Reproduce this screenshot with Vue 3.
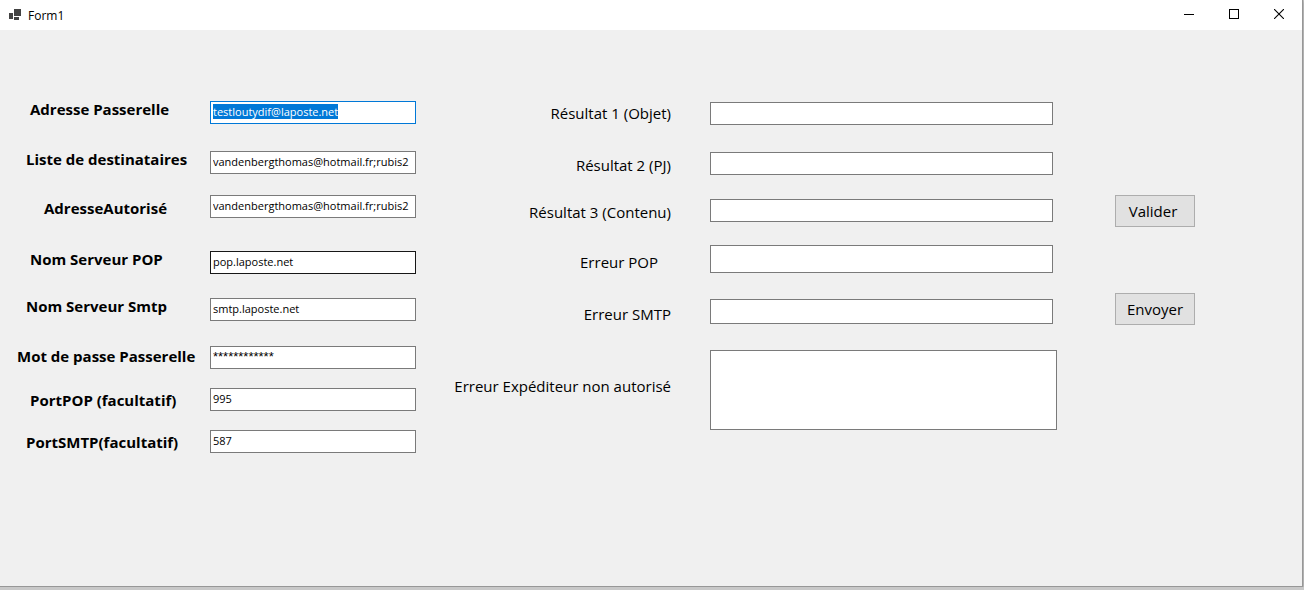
<script setup>
import { onMounted, ref } from 'vue'

const settings = ref([
  { id: 'gateway', label: 'Adresse Passerelle', value: 'testloutydif@laposte.net', indent: 'indent-l' },
  { id: 'recipients', label: 'Liste de destinataires', value: 'vandenbergthomas@hotmail.fr;rubis2', indent: 'indent-m' },
  { id: 'allowed', label: 'AdresseAutorisé', value: 'vandenbergthomas@hotmail.fr;rubis2', indent: 'indent-xl' },
  { id: 'pop', label: 'Nom Serveur POP', value: 'pop.laposte.net', indent: 'indent-l', look: 'hot' },
  { id: 'smtp', label: 'Nom Serveur Smtp', value: 'smtp.laposte.net', indent: 'indent-m' },
  { id: 'password', label: 'Mot de passe Passerelle', value: '************', indent: 'indent-s', look: 'masked' },
  { id: 'pop-port', label: 'PortPOP (facultatif)', value: '995', indent: 'indent-l' },
  { id: 'smtp-port', label: 'PortSMTP(facultatif)', value: '587', indent: 'indent-m' },
])

const results = ref([
  { id: 'subject', label: 'Résultat 1 (Objet)', value: '' },
  { id: 'attachment', label: 'Résultat 2 (PJ)', value: '' },
  { id: 'body', label: 'Résultat 3 (Contenu)', value: '' },
  { id: 'pop-error', label: 'Erreur POP', value: '', size: 'tall', inset: true },
  { id: 'smtp-error', label: 'Erreur SMTP', value: '', size: 'medium' },
])
const senderError = ref('')

onMounted(() => {
  const first = document.getElementById('gateway')
  first.focus()
  first.select()
})
</script>

<template>
  <div class="window">
    <header class="titlebar">
      <svg class="app-icon" viewBox="0 0 12 12" width="12" height="12" shape-rendering="crispEdges" aria-hidden="true">
        <path d="M5 0h7v7H5zM0 4h4v6H0zM5 8h5v3H5z" fill="#424242" />
      </svg>
      <h1 class="title">Form1</h1>
      <button class="caption" type="button" aria-label="Réduire">
        <svg viewBox="0 0 10 10" width="10" height="10" shape-rendering="crispEdges"><path d="M0 5h10v1H0z" /></svg>
      </button>
      <button class="caption" type="button" aria-label="Agrandir">
        <svg viewBox="0 0 10 10" width="10" height="10" shape-rendering="crispEdges"><path d="M0 0h10v10H0zM1 1v8h8V1z" fill-rule="evenodd" /></svg>
      </button>
      <button class="caption" type="button" aria-label="Fermer">
        <svg viewBox="0 0 10 10" width="10" height="10"><path d="M0 0l10 10M10 0L0 10" fill="none" stroke="#000" stroke-width="1.1" /></svg>
      </button>
    </header>

    <form class="form" @submit.prevent>
      <div class="setting-labels">
        <label v-for="s in settings" :key="s.id" :for="s.id" :class="s.indent">{{ s.label }}</label>
      </div>
      <div class="setting-fields">
        <input
          v-for="s in settings"
          :id="s.id"
          :key="s.id"
          v-model="s.value"
          type="text"
          class="field"
          :class="s.look"
          autocomplete="off"
          spellcheck="false"
        />
      </div>
      <div class="result-labels">
        <label v-for="r in results" :key="r.id" :for="r.id" :class="{ inset: r.inset }">{{ r.label }}</label>
        <label for="sender-error">Erreur Expéditeur non autorisé</label>
      </div>
      <div class="result-fields">
        <input v-for="r in results" :id="r.id" :key="r.id" v-model="r.value" type="text" class="field" :class="r.size" />
        <textarea id="sender-error" v-model="senderError" class="field"></textarea>
      </div>
      <div class="actions">
        <button class="action" type="button">Valider&nbsp;</button>
        <button class="action" type="submit">Envoyer</button>
      </div>
    </form>
  </div>
</template>

<style>
body {
  background: #c8c8c8;
}
</style>

<style scoped>
.window {
  display: flex;
  flex-direction: column;
  box-sizing: border-box;
  min-height: calc(100vh - 3px);
  margin-right: 1px;
  border-right: 1px solid #979797;
  border-bottom: 1px solid #979797;
  background: #f0f0f0;
  color: #000;
  font-family: "Open Sans", "Noto Sans", sans-serif;
  box-shadow: 0 1px 3px rgba(0, 0, 0, 0.3);
}

.titlebar {
  display: flex;
  align-items: center;
  height: 30px;
  padding: 0 1px 0 9px;
  background: #fff;
}

.app-icon {
  margin-right: 7px;
}

.title {
  flex: 1;
  margin: 0;
  font-size: 12px;
  font-weight: 400;
}

.caption {
  display: flex;
  align-items: center;
  justify-content: center;
  width: 45px;
  height: 28px;
  padding: 0 0 2px;
  border: 0;
  background: transparent;
}

.form {
  display: grid;
  grid-template-columns: 210px minmax(0, 206fr) 294px minmax(0, 347fr) 58px 80px;
  align-items: start;
  padding: 71px 107px 60px 0;
}

.setting-labels,
.setting-fields,
.result-labels,
.result-fields {
  display: grid;
  align-items: start;
}

.setting-labels {
  grid-template-rows: 50px 49px 51px 47px 50px 44px 42px 20px;
  margin-top: -2px;
  font-size: 15px;
  font-weight: 700;
  line-height: 20px;
  white-space: nowrap;
}

.indent-s {
  padding-left: 17px;
}

.indent-m {
  padding-left: 26px;
}

.indent-l {
  padding-left: 30px;
}

.indent-xl {
  padding-left: 44px;
}

.setting-fields {
  grid-template-rows: 50px 44px 56px 47px 48px 42px 42px 23px;
}

.result-labels {
  grid-template-rows: 52px 47px 50px 52px 72px 20px;
  margin-top: 2px;
  padding-right: 39px;
  font-size: 15px;
  line-height: 20px;
  text-align: right;
  white-space: nowrap;
}

.inset {
  padding-right: 13px;
}

.result-fields {
  grid-template-rows: 50px 47px 46px 54px 51px 80px;
  margin-top: 1px;
}

.result-fields input {
  width: calc(100% - 4px);
}

.field {
  box-sizing: border-box;
  width: 100%;
  height: 23px;
  padding: 0 2px 2px;
  border: 1px solid #7a7a7a;
  border-radius: 0;
  outline: 0;
  background: #fff;
  color: #000;
  font-family: inherit;
  font-size: 11px;
}

.field:focus {
  border-color: #0078d7;
}

.field::selection {
  background: #0078d7;
  color: #fff;
}

.masked {
  font-family: "Liberation Sans", sans-serif;
  font-size: 13px;
}

.hot {
  border-color: #171717;
}

.medium {
  height: 25px;
}

.tall {
  height: 28px;
}

textarea.field {
  display: block;
  height: 80px;
  resize: none;
}

.actions {
  display: grid;
  grid-column: 6;
  gap: 66px;
  margin-top: 94px;
}

.action {
  height: 32px;
  padding: 0;
  border: 1px solid #adadad;
  background: #e1e1e1;
  color: #000;
  font-family: inherit;
  font-size: 15px;
}
</style>
